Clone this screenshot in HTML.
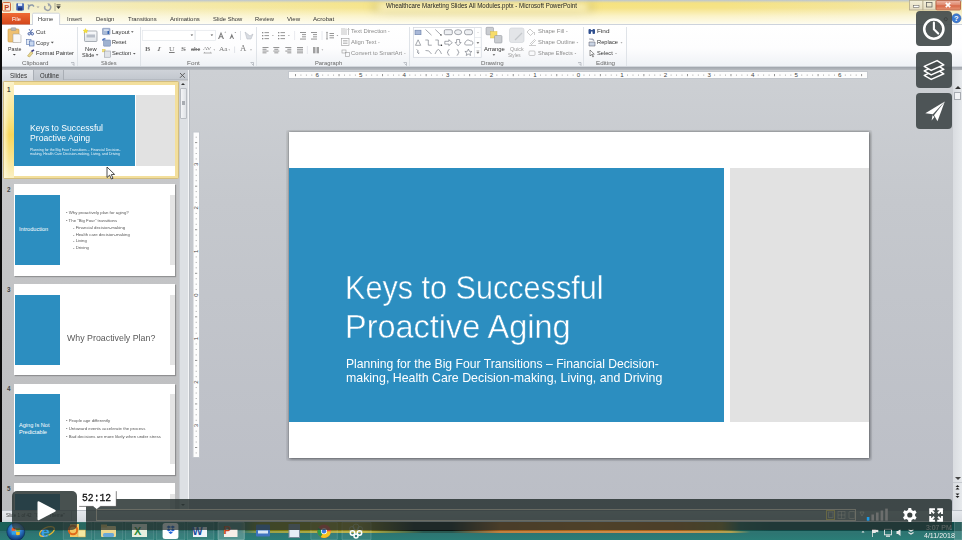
<!DOCTYPE html>
<html><head><meta charset="utf-8">
<style>
*{margin:0;padding:0;box-sizing:border-box}
html,body{width:962px;height:540px;overflow:hidden}
body{position:relative;background:#c6c9cd;font-family:"Liberation Sans",sans-serif;color:#333}
.a{position:absolute}
.t{position:absolute;white-space:nowrap;line-height:1}
svg{overflow:visible}
</style></head><body>

<!-- title bar -->
<div class="a" style="left:0;top:0;width:962px;height:25px;background:linear-gradient(90deg,#f2efcf 0%,#f4eab0 15%,#f5e48a 38%,#f6e27e 55%,#f5e282 75%,#f4e496 88%,#f2e8b0 100%)"></div>
<div class="a" style="left:0;top:0;width:962px;height:25px;background:linear-gradient(180deg,rgba(185,196,210,1) 0px,rgba(200,205,200,0.6) 1.5px,rgba(255,255,255,0) 3px,rgba(255,255,255,0.05) 8px,rgba(255,254,246,0.6) 16px,rgba(255,255,250,0.9) 24px)"></div>

<!-- ribbon -->
<div class="a" style="left:0;top:25px;width:962px;height:42px;background:linear-gradient(180deg,#ffffff 0%,#fdfdfe 55%,#eef1f5 100%)"></div>
<div class="a" style="left:0;top:66px;width:962px;height:1px;background:#d2d6dc"></div>
<div class="a" style="left:0;top:67px;width:962px;height:3px;background:linear-gradient(180deg,#9fa4ab,#b8bcc2)"></div>

<div class="a" style="left:378px;top:3px;width:210px;height:8px;background:rgba(255,252,225,0.55);filter:blur(3px);border-radius:4px;box-shadow:-6px 0 6px rgba(120,115,80,0.25),6px 0 6px rgba(120,115,80,0.25)"></div>
<svg class="a" style="left:0;top:0" width="962" height="70" viewBox="0 0 962 70">
<defs>
<linearGradient id="gFile" x1="0" y1="0" x2="0" y2="1"><stop offset="0" stop-color="#ef6a34"/><stop offset="1" stop-color="#d2461b"/></linearGradient>
<linearGradient id="gClose" x1="0" y1="0" x2="0" y2="1"><stop offset="0" stop-color="#ecb8a8"/><stop offset="0.45" stop-color="#e08a70"/><stop offset="0.55" stop-color="#d66848"/><stop offset="1" stop-color="#e89878"/></linearGradient>
<linearGradient id="gWin" x1="0" y1="0" x2="0" y2="1"><stop offset="0" stop-color="#f4f0da"/><stop offset="1" stop-color="#e4dcc0"/></linearGradient>
<linearGradient id="gSlide" x1="0" y1="0" x2="0" y2="1"><stop offset="0" stop-color="#fafbfc"/><stop offset="1" stop-color="#dfe3e8"/></linearGradient>
</defs>
<!-- QAT -->
<rect x="2.5" y="2.5" width="8" height="8.5" rx="1" fill="#fbe3d3" stroke="#d2693c" stroke-width="1"/>
<text x="4.3" y="9.6" font-family="Liberation Sans" font-size="7.5" font-weight="bold" fill="#c2461b">P</text>
<line x1="13" y1="3" x2="13" y2="11" stroke="#d9d2b0" stroke-width="0.8"/>
<rect x="16.3" y="3.3" width="7.6" height="7.2" rx="0.8" fill="#3f63b4"/>
<rect x="18" y="3.3" width="4.2" height="2.6" fill="#e8eef8"/>
<rect x="18" y="7.5" width="4.2" height="3" fill="#20357a"/>
<path d="M28.5 9.5 Q28 4.5 32.5 5 L34 6.5" fill="none" stroke="#8e9aa8" stroke-width="1.5"/>
<path d="M27.5 4 L28.5 8 L31 5.5Z" fill="#8e9aa8"/>
<path d="M36.5 6.5 l1.5 1.5 l1.5 -1.5Z" fill="#a0a0a0"/>
<path d="M45 6 A3 3 0 1 0 49.5 5" fill="none" stroke="#9aa0a8" stroke-width="1.4"/>
<path d="M47.5 3 L50.5 4 L48.5 6.5Z" fill="#9aa0a8"/>
<line x1="55" y1="3" x2="55" y2="11" stroke="#9a9a8a" stroke-width="0.8"/>
<rect x="56.5" y="4.5" width="4" height="0.8" fill="#333"/>
<path d="M56.3 6.3 h4.4 l-2.2 2.6Z" fill="#333"/>
<!-- window buttons -->
<rect x="909.5" y="0.5" width="13.5" height="9.5" fill="url(#gWin)" stroke="#b4ab8c" stroke-width="0.8"/>
<rect x="923" y="0.5" width="13" height="9.5" fill="url(#gWin)" stroke="#b4ab8c" stroke-width="0.8"/>
<rect x="913.5" y="5.5" width="5.5" height="1.8" fill="#fff" stroke="#555" stroke-width="0.5"/>
<rect x="926.5" y="2.5" width="5.5" height="4.5" fill="none" stroke="#555" stroke-width="0.7"/>
<rect x="936" y="0.5" width="24.5" height="9.5" rx="1" fill="url(#gClose)" stroke="#b55a3a" stroke-width="0.8"/>
<path d="M945.8 2.8 l4.4 4.4 M950.2 2.8 l-4.4 4.4" stroke="#fff" stroke-width="1.7"/>
<!-- tab line & tabs -->
<line x1="0" y1="24.5" x2="962" y2="24.5" stroke="#cdd3dc" stroke-width="1"/>
<rect x="2" y="13" width="28" height="11.5" fill="url(#gFile)"/>
<path d="M32.5 25 V14.5 Q32.5 13.2 33.8 13.2 H58.3 Q59.6 13.2 59.6 14.5 V25" fill="#ffffff" stroke="#c5ccd6" stroke-width="0.8"/>
<!-- group separators -->
<g stroke="#dfe3e8" stroke-width="1">
<line x1="77.5" y1="27" x2="77.5" y2="66"/>
<line x1="140.5" y1="27" x2="140.5" y2="66"/>
<line x1="256.5" y1="27" x2="256.5" y2="66"/>
<line x1="409.5" y1="27" x2="409.5" y2="66"/>
<line x1="583.5" y1="27" x2="583.5" y2="66"/>
<line x1="626.5" y1="27" x2="626.5" y2="66"/>
</g>
<!-- launchers -->
<g fill="none" stroke="#9aa0a8" stroke-width="0.6">
<path d="M71 62.5 h3 v3 M72 63.5 l2 2"/>
<path d="M250.5 62.5 h3 v3 M251.5 63.5 l2 2"/>
<path d="M403.5 62.5 h3 v3 M404.5 63.5 l2 2"/>
<path d="M578 62.5 h3 v3 M579 63.5 l2 2"/>
</g>
<!-- clipboard: paste -->
<rect x="8" y="29" width="11" height="13" rx="1" fill="#eec070" stroke="#c99a48" stroke-width="0.6"/>
<rect x="11" y="27.7" width="5" height="2.8" rx="0.8" fill="#b8b8b8" stroke="#888" stroke-width="0.4"/>
<path d="M13 34 h6.5 l1.5 1.5 v7 h-8Z" fill="#f8f8f8" stroke="#9a9a9a" stroke-width="0.5"/>
<path d="M12.8 54 h3 l-1.5 1.6Z" fill="#444"/>
<!-- cut -->
<path d="M29 29 L31.5 33 M32.5 29 L30 33" stroke="#5870a8" stroke-width="0.9"/>
<circle cx="29.2" cy="33.8" r="1.2" fill="none" stroke="#2f4e9a" stroke-width="0.9"/>
<circle cx="32.3" cy="33.8" r="1.2" fill="none" stroke="#2f4e9a" stroke-width="0.9"/>
<!-- copy -->
<rect x="26.5" y="39.5" width="4.5" height="5" fill="#dfe8f5" stroke="#5a78b0" stroke-width="0.6"/>
<rect x="29.5" y="41" width="4.5" height="5" fill="#c8d8ef" stroke="#4a68a8" stroke-width="0.6"/>
<path d="M50.8 41.8 h3 l-1.5 1.6Z" fill="#555"/>
<!-- format painter -->
<path d="M27.5 56 L31 51.5 L33 53 L29.5 57Z" fill="#e8d890" stroke="#a89040" stroke-width="0.5"/>
<path d="M31.5 51.5 L34 49.8" stroke="#403a80" stroke-width="1.6"/>
<!-- slides: new slide -->
<rect x="84.5" y="31" width="12.5" height="10.5" rx="0.8" fill="url(#gSlide)" stroke="#8a9099" stroke-width="0.7"/>
<rect x="86.5" y="34.5" width="8.5" height="3" fill="#b8bec8"/>
<path d="M85.5 28.5 l0.8 1.6 1.7 0.2 -1.3 1.1 0.4 1.7 -1.6 -0.9 -1.6 0.9 0.4 -1.7 -1.3 -1.1 1.7 -0.2Z" fill="#f6e23a" stroke="#e0c020" stroke-width="0.3"/>
<path d="M95.8 54.2 h2.6 l-1.3 1.5Z" fill="#555"/>
<!-- layout/reset/section -->
<rect x="102.5" y="28.3" width="7.5" height="6.3" rx="0.6" fill="#a9bad6" stroke="#6a7fa8" stroke-width="0.5"/>
<rect x="104" y="29.5" width="4.5" height="1.2" fill="#e8eef8"/>
<rect x="107.5" y="31" width="1.5" height="3" fill="#3060b0"/>
<path d="M131 31.3 h2.6 l-1.3 1.5Z" fill="#555"/>
<rect x="103.5" y="40" width="7" height="6.2" rx="0.6" fill="#9fb2d0" stroke="#6a7fa8" stroke-width="0.5"/>
<path d="M102.5 40.5 Q103 38.5 105.5 39" fill="none" stroke="#2f5ab0" stroke-width="1.2"/>
<rect x="102.5" y="49.3" width="2.6" height="2.6" fill="#f6e47a" stroke="#d8bc40" stroke-width="0.4"/>
<rect x="104.5" y="51" width="6" height="6.2" fill="#e0e3e8" stroke="#8a9099" stroke-width="0.5"/>
<path d="M133 53 h2.6 l-1.3 1.5Z" fill="#555"/>
<!-- font combos -->
<rect x="142.3" y="30.3" width="52.5" height="10.2" fill="#fff" stroke="#e2e5ea" stroke-width="0.7"/>
<rect x="195.5" y="30.3" width="20" height="10.2" fill="#fff" stroke="#e2e5ea" stroke-width="0.7"/>
<path d="M190.6 34.5 h2.6 l-1.3 1.5Z" fill="#555"/>
<path d="M210.6 34.5 h2.6 l-1.3 1.5Z" fill="#555"/>
<!-- grow/shrink -->
<g fill="#7a7a7a">
<path d="M218 39 L221 31.8 L224 39 h-1.2 l-0.7 -1.8 h-2.2 l-0.7 1.8Z M220.3 36.2 h1.5 l-0.75 -2Z"/>
<path d="M224.5 32.5 l0.8 -1 0.8 1Z"/>
<path d="M229.5 39 L231.8 33.5 L234 39 h-1 l-0.5 -1.4 h-1.5 l-0.5 1.4Z"/>
<path d="M234.5 32 l0.8 1 0.8 -1Z"/>
</g>
<line x1="240.5" y1="31" x2="240.5" y2="40" stroke="#e0e3e8"/>
<path d="M245 32 l5 4 l3 -2 l-2 5 l-4 0Z" fill="#d8dce2" stroke="#b0b5bc" stroke-width="0.5"/>
<!-- font row2 -->
<line x1="234.6" y1="46.5" x2="234.6" y2="53" stroke="#e0e3e8"/>
<path d="M213.5 49.5 h1.6 l-0.8 0.9Z M228.5 49.5 h1.6 l-0.8 0.9Z M250 49.5 h2 l-1 1Z" fill="#888"/>
<path d="M203.8 53 h7.6 M203.8 53 l1 -0.8 M211.4 53 l-1 -0.8" stroke="#7a7a7a" stroke-width="0.6" fill="none"/>
<!-- paragraph icons -->
<g fill="#8a8a8a">
<rect x="262" y="32" width="1.3" height="1.3"/><rect x="264.5" y="32.2" width="4.5" height="0.9"/>
<rect x="262" y="35" width="1.3" height="1.3"/><rect x="264.5" y="35.2" width="4.5" height="0.9"/>
<rect x="262" y="38" width="1.3" height="1.3"/><rect x="264.5" y="38.2" width="4.5" height="0.9"/>
<rect x="278" y="32" width="1.3" height="1.3"/><rect x="280.5" y="32.2" width="4.5" height="0.9"/>
<rect x="278" y="35" width="1.3" height="1.3"/><rect x="280.5" y="35.2" width="4.5" height="0.9"/>
<rect x="278" y="38" width="1.3" height="1.3"/><rect x="280.5" y="38.2" width="4.5" height="0.9"/>
<path d="M272 35 h1.8 l-0.9 1Z M288 35 h1.8 l-0.9 1Z M336.5 35 h1.8 l-0.9 1Z M321.5 49.5 h1.8 l-0.9 1Z"/>
<rect x="300" y="32" width="6" height="0.9"/><rect x="302" y="34.2" width="4" height="0.9"/><rect x="302" y="36.4" width="4" height="0.9"/><rect x="300" y="38.6" width="6" height="0.9"/>
<rect x="311" y="32" width="6" height="0.9"/><rect x="313" y="34.2" width="4" height="0.9"/><rect x="313" y="36.4" width="4" height="0.9"/><rect x="311" y="38.6" width="6" height="0.9"/>
<rect x="329.5" y="33" width="4.5" height="0.9"/><rect x="329.5" y="35.2" width="4.5" height="0.9"/><rect x="329.5" y="37.4" width="4.5" height="0.9"/>
<path d="M327 31.5 l1 1.5 h-2Z M327 40 l1 -1.5 h-2Z"/><rect x="326.6" y="32.8" width="0.8" height="6"/>
<rect x="262.5" y="47" width="6" height="0.9"/><rect x="262.5" y="48.8" width="4" height="0.9"/><rect x="262.5" y="50.6" width="6" height="0.9"/><rect x="262.5" y="52.4" width="4" height="0.9"/>
<rect x="273.3" y="47" width="6" height="0.9"/><rect x="274.3" y="48.8" width="4" height="0.9"/><rect x="273.3" y="50.6" width="6" height="0.9"/><rect x="274.3" y="52.4" width="4" height="0.9"/>
<rect x="285.3" y="47" width="6" height="0.9"/><rect x="287.3" y="48.8" width="4" height="0.9"/><rect x="285.3" y="50.6" width="6" height="0.9"/><rect x="287.3" y="52.4" width="4" height="0.9"/>
<rect x="297" y="47" width="6" height="0.9"/><rect x="297" y="48.8" width="6" height="0.9"/><rect x="297" y="50.6" width="6" height="0.9"/><rect x="297" y="52.4" width="6" height="0.9"/>
<rect x="313" y="47" width="2.5" height="6.3" opacity="0.8"/><rect x="316.5" y="47" width="2.5" height="6.3" opacity="0.8"/>
</g>
<g stroke="#e2e5ea" stroke-width="0.8"><line x1="294.6" y1="31" x2="294.6" y2="40"/><line x1="322" y1="31" x2="322" y2="40"/><line x1="307.4" y1="46" x2="307.4" y2="54"/></g>
<!-- text direction / align / smartart -->
<g fill="none" stroke="#9a9a9a" stroke-width="0.6">
<path d="M342 35 V28 M344 35 V28 M346 35 V28.5 M348.5 35 V28.5 l-1 1 M348.5 28.5 l1 1"/>
<rect x="341.5" y="38.5" width="7.5" height="7"/>
<path d="M343 40.5 h4.5 M343 42 h4.5 M343 43.5 h4.5"/>
<rect x="342" y="50" width="4" height="3"/><rect x="345.5" y="52.5" width="4" height="4"/>
</g>
<path d="M388 31 h1.8 l-0.9 1Z M378 42.3 h1.8 l-0.9 1Z M404 53 h1.8 l-0.9 1Z" fill="#aaa"/>
<!-- shapes gallery -->
<rect x="413.6" y="27.6" width="67.6" height="29.7" fill="#fff" stroke="#d0d5dc" stroke-width="0.7"/>
<line x1="474.5" y1="28" x2="474.5" y2="57" stroke="#dde1e6" stroke-width="0.7"/>
<line x1="474.5" y1="37.5" x2="481" y2="37.5" stroke="#dde1e6" stroke-width="0.6"/>
<line x1="474.5" y1="47.5" x2="481" y2="47.5" stroke="#dde1e6" stroke-width="0.6"/>
<path d="M476.5 42.2 h2.8 l-1.4 1.6Z" fill="#555"/>
<path d="M476.5 50.8 h2.8 M476.8 52 h2.2 l-1.1 1.5Z" stroke="#777" stroke-width="0.5" fill="#777"/>
<path d="M477 33 l1 -1 1 1" fill="none" stroke="#ccc" stroke-width="0.5"/>
<g fill="none" stroke="#6a6f78" stroke-width="0.6">
<rect x="415" y="30.2" width="6" height="4.5" fill="#a9b8d8" stroke="#6a7fa8"/>
<path d="M425.5 29.5 L431.5 35.2"/>
<path d="M435.3 29.5 L441 35"/>
<rect x="444.3" y="29.7" width="8" height="5" rx="1.2" fill="#eef0f3"/>
<ellipse cx="458.1" cy="32.2" rx="3.6" ry="2.5" fill="#eef0f3"/>
<rect x="464.5" y="29.7" width="8" height="5" rx="2" fill="#eef0f3"/>
<path d="M415.5 45.3 L418.1 39.8 L420.7 45.3Z"/>
<path d="M425.3 40 h3 v5.2 h3.5"/>
<path d="M435.3 40 h3 v5.2 h3"/>
<path d="M444.8 41.3 h4 v-1.6 l3.5 3 -3.5 3 v-1.6 h-4Z"/>
<path d="M456.6 39.5 h3 v3 h1.5 l-3 3.3 -3 -3.3 h1.5Z"/>
<path d="M465.5 45 a2 2 0 0 1 0.5 -3.5 a2.2 2.2 0 0 1 4 -0.5 a2 2 0 0 1 1.5 4Z"/>
<path d="M416.5 49.5 l2 1.5 -1.5 1 2 1.5 M418.5 54 l0.5 -1.5"/>
<path d="M425.5 50.5 Q429 49.5 431.5 54"/>
<path d="M435 54 Q437 49 438.5 49.5 Q440 50 441.5 54"/>
<path d="M449.5 49.5 Q448 49.5 448 51.2 Q448 52.3 447 52.4 Q448 52.5 448 53.6 Q448 55.3 449.5 55.3"/>
<path d="M456.7 49.5 Q458.2 49.5 458.2 51.2 Q458.2 52.3 459.2 52.4 Q458.2 52.5 458.2 53.6 Q458.2 55.3 456.7 55.3"/>
<path d="M468.4 49 l1 2.3 2.5 0.2 -1.9 1.6 0.6 2.4 -2.2 -1.3 -2.2 1.3 0.6 -2.4 -1.9 -1.6 2.5 -0.2Z"/>
</g>
<circle cx="441" cy="35" r="0.7" fill="#222"/><circle cx="441.5" cy="45.2" r="0.7" fill="#222"/>
<!-- arrange -->
<rect x="486" y="27.3" width="7.5" height="7.5" rx="1" fill="#c9ccd0" stroke="#8a8f96" stroke-width="0.5"/>
<rect x="490.5" y="31.5" width="6.5" height="6.5" fill="#f7dc6a" stroke="#d6b83a" stroke-width="0.4"/>
<rect x="494.5" y="35.5" width="7.5" height="7.5" rx="1" fill="#c9ccd0" stroke="#8a8f96" stroke-width="0.5"/>
<path d="M492.6 54.3 h2.6 l-1.3 1.5Z" fill="#555"/>
<!-- quick styles -->
<rect x="509.5" y="28" width="14.5" height="14.5" rx="2" fill="#e3e5e8" stroke="#cfd2d6" stroke-width="0.6"/>
<path d="M515 40 L522 33" stroke="#c5c8cc" stroke-width="1.2"/>
<!-- shape fill etc -->
<g fill="none" stroke="#aaa" stroke-width="0.6">
<path d="M530 29 l3.5 3.5 -3 3 -3.5 -3.5Z"/><path d="M534.5 32 v3"/>
<path d="M529 45.5 h7 M530 44 l4.5 -4.5 1 1 -4.5 4.5"/>
<rect x="529" y="51" width="6" height="4.5" rx="1"/>
</g>
<path d="M566 31 h1.8 l-0.9 1Z M576.5 42.3 h1.8 l-0.9 1Z M574.5 53 h1.8 l-0.9 1Z M620.5 42.3 h2 l-1 1.1Z M615 53 h2 l-1 1.1Z" fill="#999"/>
<!-- editing -->
<g fill="#2f4f8f">
<rect x="588.5" y="29" width="2.5" height="5" rx="1"/><rect x="592.5" y="29" width="2.5" height="5" rx="1"/><rect x="590.5" y="30" width="2.5" height="1.5"/>
</g>
<path d="M589 39 h4 l1 2 M589 42 h6 v4 h-6Z" fill="#c9d3e3" stroke="#556" stroke-width="0.5"/>
<path d="M590 50 v6 l1.5 -1.5 1.3 2.5 0.8 -0.4 -1.3 -2.4 h2Z" fill="#fff" stroke="#333" stroke-width="0.5"/>
</svg>

<div class="t" style="left:386.2px;top:3.2px;font-size:6.8px;color:#222;transform:scaleX(0.901);transform-origin:0 0">Whealthcare Marketing Slides All Modules.pptx - Microsoft PowerPoint</div>
<div class="t" style="left:11.6px;top:16.0px;font-size:6.2px;color:#ffffff;transform:scaleX(0.891);transform-origin:0 0">File</div>
<div class="t" style="left:38.4px;top:15.8px;font-size:6.2px;color:#333;transform:scaleX(0.926);transform-origin:0 0">Home</div>
<div class="t" style="left:67.1px;top:15.8px;font-size:6.2px;color:#333;transform:scaleX(0.962);transform-origin:0 0">Insert</div>
<div class="t" style="left:95.7px;top:15.8px;font-size:6.2px;color:#333;transform:scaleX(0.955);transform-origin:0 0">Design</div>
<div class="t" style="left:127.6px;top:15.8px;font-size:6.2px;color:#333;transform:scaleX(0.952);transform-origin:0 0">Transitions</div>
<div class="t" style="left:169.5px;top:15.8px;font-size:6.2px;color:#333;transform:scaleX(0.974);transform-origin:0 0">Animations</div>
<div class="t" style="left:212.5px;top:15.8px;font-size:6.2px;color:#333;transform:scaleX(0.946);transform-origin:0 0">Slide Show</div>
<div class="t" style="left:255.1px;top:15.8px;font-size:6.2px;color:#333;transform:scaleX(0.936);transform-origin:0 0">Review</div>
<div class="t" style="left:287.1px;top:15.8px;font-size:6.2px;color:#333;transform:scaleX(0.992);transform-origin:0 0">View</div>
<div class="t" style="left:313.4px;top:15.8px;font-size:6.2px;color:#333;transform:scaleX(0.994);transform-origin:0 0">Acrobat</div>
<div class="t" style="left:7.6px;top:45.5px;font-size:6.2px;color:#333;transform:scaleX(0.853);transform-origin:0 0">Paste</div>
<div class="t" style="left:35.9px;top:28.7px;font-size:6.2px;color:#333;transform:scaleX(0.965);transform-origin:0 0">Cut</div>
<div class="t" style="left:35.9px;top:39.5px;font-size:6.2px;color:#333;transform:scaleX(0.927);transform-origin:0 0">Copy</div>
<div class="t" style="left:35.9px;top:50.3px;font-size:6.2px;color:#333;transform:scaleX(0.929);transform-origin:0 0">Format Painter</div>
<div class="t" style="left:22.0px;top:60.3px;font-size:6.2px;color:#666;transform:scaleX(1.001);transform-origin:0 0">Clipboard</div>
<div class="t" style="left:84.7px;top:45.7px;font-size:6.2px;color:#333;transform:scaleX(0.936);transform-origin:0 0">New</div>
<div class="t" style="left:82.2px;top:51.8px;font-size:6.2px;color:#333;transform:scaleX(0.901);transform-origin:0 0">Slide</div>
<div class="t" style="left:111.6px;top:28.7px;font-size:6.2px;color:#333;transform:scaleX(0.953);transform-origin:0 0">Layout</div>
<div class="t" style="left:111.7px;top:39.3px;font-size:6.2px;color:#333;transform:scaleX(0.884);transform-origin:0 0">Reset</div>
<div class="t" style="left:112.0px;top:50.2px;font-size:6.2px;color:#333;transform:scaleX(0.935);transform-origin:0 0">Section</div>
<div class="t" style="left:100.6px;top:60.3px;font-size:6.2px;color:#666;transform:scaleX(0.931);transform-origin:0 0">Slides</div>
<div class="t" style="left:186.6px;top:60.3px;font-size:6.2px;color:#666;transform:scaleX(1.033);transform-origin:0 0">Font</div>
<div class="t" style="left:350.7px;top:28.2px;font-size:6.2px;color:#8c8c8c;transform:scaleX(0.950);transform-origin:0 0">Text Direction</div>
<div class="t" style="left:350.7px;top:39.4px;font-size:6.2px;color:#8c8c8c;transform:scaleX(0.951);transform-origin:0 0">Align Text</div>
<div class="t" style="left:350.7px;top:50.3px;font-size:6.2px;color:#8c8c8c;transform:scaleX(0.936);transform-origin:0 0">Convert to SmartArt</div>
<div class="t" style="left:314.7px;top:60.3px;font-size:6.2px;color:#666;transform:scaleX(0.938);transform-origin:0 0">Paragraph</div>
<div class="t" style="left:483.6px;top:45.5px;font-size:6.2px;color:#333;transform:scaleX(0.949);transform-origin:0 0">Arrange</div>
<div class="t" style="left:509.9px;top:45.5px;font-size:6.2px;color:#9a9a9a;transform:scaleX(0.866);transform-origin:0 0">Quick</div>
<div class="t" style="left:507.5px;top:51.8px;font-size:6.2px;color:#9a9a9a;transform:scaleX(0.747);transform-origin:0 0">Styles</div>
<div class="t" style="left:537.9px;top:28.1px;font-size:6.2px;color:#8c8c8c;transform:scaleX(0.959);transform-origin:0 0">Shape Fill</div>
<div class="t" style="left:537.9px;top:39.4px;font-size:6.2px;color:#8c8c8c;transform:scaleX(0.946);transform-origin:0 0">Shape Outline</div>
<div class="t" style="left:537.9px;top:50.3px;font-size:6.2px;color:#8c8c8c;transform:scaleX(0.903);transform-origin:0 0">Shape Effects</div>
<div class="t" style="left:480.7px;top:60.3px;font-size:6.2px;color:#666;transform:scaleX(0.995);transform-origin:0 0">Drawing</div>
<div class="t" style="left:597.2px;top:28.1px;font-size:6.2px;color:#333;transform:scaleX(1.038);transform-origin:0 0">Find</div>
<div class="t" style="left:597.2px;top:39.4px;font-size:6.2px;color:#333;transform:scaleX(0.925);transform-origin:0 0">Replace</div>
<div class="t" style="left:597.2px;top:50.3px;font-size:6.2px;color:#333;transform:scaleX(0.913);transform-origin:0 0">Select</div>
<div class="t" style="left:595.9px;top:60.3px;font-size:6.2px;color:#666;transform:scaleX(1.009);transform-origin:0 0">Editing</div>
<div class="t" style="left:145.2px;top:46.0px;font-size:6.8px;color:#7a7a7a;font-weight:bold;font-family:'Liberation Serif',serif;transform:scaleX(1.166);transform-origin:0 0">B</div>
<div class="t" style="left:156.9px;top:46.0px;font-size:6.8px;color:#7a7a7a;font-family:'Liberation Serif',serif;transform:scaleX(1.721);transform-origin:0 0"><i>I</i></div>
<div class="t" style="left:168.7px;top:45.8px;font-size:6.8px;color:#7a7a7a;font-family:'Liberation Serif',serif;transform:scaleX(1.138);transform-origin:0 0"><u>U</u></div>
<div class="t" style="left:180.7px;top:46.0px;font-size:6.8px;color:#7a7a7a;font-weight:bold;font-family:'Liberation Serif',serif;transform:scaleX(1.349);transform-origin:0 0">S</div>
<div class="t" style="left:190.7px;top:46.4px;font-size:6.5px;color:#7a7a7a;font-weight:bold;font-family:'Liberation Serif',serif;transform:scaleX(0.933);transform-origin:0 0"><s>abc</s></div>
<div class="t" style="left:203.4px;top:45.6px;font-size:5px;color:#7a7a7a;font-family:'Liberation Serif',serif;transform:scaleX(1.262);transform-origin:0 0">AV</div>
<div class="t" style="left:218.7px;top:45.9px;font-size:7px;color:#7a7a7a;font-family:'Liberation Serif',serif;transform:scaleX(1.052);transform-origin:0 0">Aa</div>
<div class="t" style="left:240.0px;top:45.4px;font-size:7.5px;color:#7a7a7a;font-family:'Liberation Serif',serif;transform:scaleX(1.162);transform-origin:0 0">A</div>

<!-- left panel -->
<div class="a" style="left:2px;top:70px;width:186px;height:440px;background:linear-gradient(180deg,#cacbcd 0%,#bbbcbe 100%)"></div>
<!-- panel tabs -->
<div class="a" style="left:2px;top:70px;width:186px;height:10px;background:linear-gradient(180deg,#cfd3d9,#c3c8cf);border-bottom:1px solid #b5bac1"></div>
<div class="a" style="left:2px;top:70px;width:31px;height:11px;background:linear-gradient(180deg,#e4e7eb,#d6d9de)"></div>
<div class="a" style="left:33px;top:70px;width:31px;height:10px;background:linear-gradient(180deg,#cdd1d7,#bfc4cb);border-left:1px solid #a9aeb5;border-right:1px solid #a9aeb5"></div>
<div class="t" style="left:10px;top:71.5px;font-size:8px;color:#333;transform:scaleX(0.78);transform-origin:0 0">Slides</div>
<div class="t" style="left:39.5px;top:71.5px;font-size:8px;color:#333;transform:scaleX(0.75);transform-origin:0 0">Outline</div>
<svg class="a" style="left:178px;top:71px" width="9" height="9" viewBox="0 0 9 9"><path d="M2 2 L6.8 6.8 M6.8 2 L2 6.8" stroke="#555" stroke-width="0.9"/></svg>

<!-- panel scrollbar -->
<div class="a" style="left:179px;top:81px;width:9px;height:429px;background:#dde0e4;border-left:1px solid #c8ccd1"></div>
<div class="a" style="left:180px;top:88px;width:7px;height:31px;background:linear-gradient(90deg,#f4f5f7,#dfe2e6);border:1px solid #b8bcc2;border-radius:1px"></div>
<div class="a" style="left:182px;top:101px;width:3px;height:4px;background:#a8acb2"></div>
<div class="a" style="left:181.2px;top:82.8px;width:0;height:0;border-left:2.3px solid transparent;border-right:2.3px solid transparent;border-bottom:2.3px solid #333"></div>
<div class="a" style="left:188px;top:70px;width:1px;height:440px;background:#f4f5f7"></div>
<div class="a" style="left:189px;top:70px;width:1px;height:440px;background:#b9bdc3"></div>

<!-- thumb 1 selected -->
<div class="a" style="left:2.5px;top:81px;width:176.5px;height:98px;background:#f3df9c;border:1px solid #d2bd80;border-radius:1.5px"></div>
<div class="a" style="left:3.5px;top:82px;width:10.5px;height:96px;background:linear-gradient(180deg,#fbf1c8 0%,#f9e68e 35%,#f7d65a 55%,#f9e490 80%,#fbf0c4 100%)"></div>
<div class="a" style="left:3.5px;top:82px;width:5px;height:96px;background:linear-gradient(90deg,rgba(255,250,225,0.7),rgba(255,250,225,0))"></div>
<div class="t" style="left:7px;top:87px;font-size:6.3px;font-weight:bold;color:#444">1</div>
<div class="a" style="left:14px;top:85px;width:161px;height:91px;background:#fff"></div>
<div class="a" style="left:14px;top:95px;width:120.5px;height:70.5px;background:#2c8ec0"></div>
<div class="a" style="left:136px;top:95px;width:39px;height:70.5px;background:#e2e2e2"></div>
<div class="t" style="left:30px;top:123px;font-size:9.5px;color:#fff;line-height:10.3px;transform:scaleX(0.91);transform-origin:0 0">Keys to Successful<br>Proactive Aging</div>
<div class="t" style="left:30px;top:147.5px;font-size:9.5px;color:#e8f2f8;line-height:10.5px;transform:scale(0.37);transform-origin:0 0">Planning for the Big Four Transitions &#8211; Financial Decision-<br>making, Health Care Decision-making, Living, and Driving</div>

<!-- thumb 2 -->
<div class="t" style="left:7px;top:186.8px;font-size:6.3px;font-weight:bold;color:#444">2</div>
<div class="a" style="left:14px;top:184px;width:161px;height:91.5px;background:#fff;box-shadow:1px 1px 1px rgba(0,0,0,0.25)"></div>
<div class="a" style="left:15px;top:195px;width:44.5px;height:69.5px;background:#2c8ec0"></div>
<div class="a" style="left:170px;top:195px;width:4.5px;height:69.5px;background:#e4e4e4"></div>
<div class="t" style="left:19px;top:227px;font-size:5.6px;color:#fff">Introduction</div>
<div class="t" style="left:66px;top:208.8px;font-size:10px;color:#555;line-height:15px;transform:scale(0.43);transform-origin:0 0">&#8226; Why proactively plan for aging?</div>
<div class="t" style="left:66px;top:217.2px;font-size:10px;color:#555;line-height:15px;transform:scale(0.43);transform-origin:0 0">&#8226; The &#8220;Big Four&#8221; transitions</div>
<div class="t" style="left:73px;top:223.7px;font-size:10px;color:#555;line-height:15.6px;transform:scale(0.43);transform-origin:0 0">- Financial decision-making<br>- Health care decision-making<br>- Living<br>- Driving</div>

<!-- thumb 3 -->
<div class="t" style="left:7px;top:286.8px;font-size:6.3px;font-weight:bold;color:#444">3</div>
<div class="a" style="left:14px;top:283.5px;width:161px;height:91.5px;background:#fff;box-shadow:1px 1px 1px rgba(0,0,0,0.25)"></div>
<div class="a" style="left:15px;top:295px;width:44.5px;height:69.5px;background:#2c8ec0"></div>
<div class="a" style="left:170px;top:295px;width:4.5px;height:69.5px;background:#e4e4e4"></div>
<div class="t" style="left:66.5px;top:333px;font-size:9.6px;color:#5a5a5a;transform:scaleX(0.92);transform-origin:0 0">Why Proactively Plan?</div>

<!-- thumb 4 -->
<div class="t" style="left:7px;top:385.8px;font-size:6.3px;font-weight:bold;color:#444">4</div>
<div class="a" style="left:14px;top:383.5px;width:161px;height:91px;background:#fff;box-shadow:1px 1px 1px rgba(0,0,0,0.25)"></div>
<div class="a" style="left:15px;top:394px;width:44.5px;height:69.5px;background:#2c8ec0"></div>
<div class="a" style="left:170px;top:394px;width:4.5px;height:69.5px;background:#e4e4e4"></div>
<div class="t" style="left:19px;top:422px;font-size:5.6px;color:#fff;line-height:6.5px">Aging Is Not<br>Predictable</div>
<div class="t" style="left:66px;top:416.3px;font-size:10px;color:#555;line-height:19.3px;transform:scale(0.43);transform-origin:0 0">&#8226; People age differently<br>&#8226; Untoward events accelerate the process<br>&#8226; Bad decisions are more likely when under stress</div>

<!-- thumb 5 -->
<div class="t" style="left:7px;top:485.8px;font-size:6.3px;font-weight:bold;color:#444">5</div>
<div class="a" style="left:14px;top:483px;width:161px;height:30px;background:#fff"></div>
<div class="a" style="left:15px;top:494px;width:44.5px;height:20px;background:#2c8ec0"></div>
<div class="a" style="left:170px;top:494px;width:4.5px;height:20px;background:#e4e4e4"></div>


<svg class="a" style="left:105.5px;top:165.5px" width="10" height="14" viewBox="0 0 10 14"><path d="M1 1 V11.5 L3.6 9.2 L5.4 13 L7 12.3 L5.3 8.6 L8.6 8.4Z" fill="#fff" stroke="#222" stroke-width="0.8" stroke-linejoin="round"/></svg>
<div class="a" style="left:180.5px;top:503.5px;width:0;height:0;border-left:2.5px solid transparent;border-right:2.5px solid transparent;border-top:2.5px solid #444"></div>


<div class="a" style="left:190px;top:70px;width:763px;height:440px;background:linear-gradient(180deg,#cdd0d4 0%,#c5c8cd 30%,#bbbec6 100%)"></div>
<!-- rulers -->
<svg class="a" style="left:288px;top:71px" width="580" height="8" viewBox="288 71 580 8">
<rect x="288.5" y="71.5" width="579" height="7" fill="#fdfdfd" stroke="#c3c7cd" stroke-width="1"/>
<rect x="295.03" y="74" width="0.9" height="2.2" fill="#888"/>
<rect x="300.47" y="74.6" width="0.9" height="1" fill="#999"/>
<rect x="305.91" y="74.6" width="0.9" height="1" fill="#999"/>
<rect x="311.36" y="74.6" width="0.9" height="1" fill="#999"/>
<text x="317.20" y="77.3" font-family="Liberation Sans" font-size="6.2" fill="#444" text-anchor="middle">6</text>
<rect x="322.24" y="74.6" width="0.9" height="1" fill="#999"/>
<rect x="327.69" y="74.6" width="0.9" height="1" fill="#999"/>
<rect x="333.13" y="74.6" width="0.9" height="1" fill="#999"/>
<rect x="338.58" y="74" width="0.9" height="2.2" fill="#888"/>
<rect x="344.02" y="74.6" width="0.9" height="1" fill="#999"/>
<rect x="349.46" y="74.6" width="0.9" height="1" fill="#999"/>
<rect x="354.91" y="74.6" width="0.9" height="1" fill="#999"/>
<text x="360.75" y="77.3" font-family="Liberation Sans" font-size="6.2" fill="#444" text-anchor="middle">5</text>
<rect x="365.79" y="74.6" width="0.9" height="1" fill="#999"/>
<rect x="371.24" y="74.6" width="0.9" height="1" fill="#999"/>
<rect x="376.68" y="74.6" width="0.9" height="1" fill="#999"/>
<rect x="382.12" y="74" width="0.9" height="2.2" fill="#888"/>
<rect x="387.57" y="74.6" width="0.9" height="1" fill="#999"/>
<rect x="393.01" y="74.6" width="0.9" height="1" fill="#999"/>
<rect x="398.46" y="74.6" width="0.9" height="1" fill="#999"/>
<text x="404.30" y="77.3" font-family="Liberation Sans" font-size="6.2" fill="#444" text-anchor="middle">4</text>
<rect x="409.34" y="74.6" width="0.9" height="1" fill="#999"/>
<rect x="414.79" y="74.6" width="0.9" height="1" fill="#999"/>
<rect x="420.23" y="74.6" width="0.9" height="1" fill="#999"/>
<rect x="425.68" y="74" width="0.9" height="2.2" fill="#888"/>
<rect x="431.12" y="74.6" width="0.9" height="1" fill="#999"/>
<rect x="436.56" y="74.6" width="0.9" height="1" fill="#999"/>
<rect x="442.01" y="74.6" width="0.9" height="1" fill="#999"/>
<text x="447.85" y="77.3" font-family="Liberation Sans" font-size="6.2" fill="#444" text-anchor="middle">3</text>
<rect x="452.89" y="74.6" width="0.9" height="1" fill="#999"/>
<rect x="458.34" y="74.6" width="0.9" height="1" fill="#999"/>
<rect x="463.78" y="74.6" width="0.9" height="1" fill="#999"/>
<rect x="469.23" y="74" width="0.9" height="2.2" fill="#888"/>
<rect x="474.67" y="74.6" width="0.9" height="1" fill="#999"/>
<rect x="480.11" y="74.6" width="0.9" height="1" fill="#999"/>
<rect x="485.56" y="74.6" width="0.9" height="1" fill="#999"/>
<text x="491.40" y="77.3" font-family="Liberation Sans" font-size="6.2" fill="#444" text-anchor="middle">2</text>
<rect x="496.44" y="74.6" width="0.9" height="1" fill="#999"/>
<rect x="501.89" y="74.6" width="0.9" height="1" fill="#999"/>
<rect x="507.33" y="74.6" width="0.9" height="1" fill="#999"/>
<rect x="512.77" y="74" width="0.9" height="2.2" fill="#888"/>
<rect x="518.22" y="74.6" width="0.9" height="1" fill="#999"/>
<rect x="523.66" y="74.6" width="0.9" height="1" fill="#999"/>
<rect x="529.11" y="74.6" width="0.9" height="1" fill="#999"/>
<text x="534.95" y="77.3" font-family="Liberation Sans" font-size="6.2" fill="#444" text-anchor="middle">1</text>
<rect x="539.99" y="74.6" width="0.9" height="1" fill="#999"/>
<rect x="545.44" y="74.6" width="0.9" height="1" fill="#999"/>
<rect x="550.88" y="74.6" width="0.9" height="1" fill="#999"/>
<rect x="556.33" y="74" width="0.9" height="2.2" fill="#888"/>
<rect x="561.77" y="74.6" width="0.9" height="1" fill="#999"/>
<rect x="567.21" y="74.6" width="0.9" height="1" fill="#999"/>
<rect x="572.66" y="74.6" width="0.9" height="1" fill="#999"/>
<text x="578.50" y="77.3" font-family="Liberation Sans" font-size="6.2" fill="#444" text-anchor="middle">0</text>
<rect x="583.54" y="74.6" width="0.9" height="1" fill="#999"/>
<rect x="588.99" y="74.6" width="0.9" height="1" fill="#999"/>
<rect x="594.43" y="74.6" width="0.9" height="1" fill="#999"/>
<rect x="599.88" y="74" width="0.9" height="2.2" fill="#888"/>
<rect x="605.32" y="74.6" width="0.9" height="1" fill="#999"/>
<rect x="610.76" y="74.6" width="0.9" height="1" fill="#999"/>
<rect x="616.21" y="74.6" width="0.9" height="1" fill="#999"/>
<text x="622.05" y="77.3" font-family="Liberation Sans" font-size="6.2" fill="#444" text-anchor="middle">1</text>
<rect x="627.09" y="74.6" width="0.9" height="1" fill="#999"/>
<rect x="632.54" y="74.6" width="0.9" height="1" fill="#999"/>
<rect x="637.98" y="74.6" width="0.9" height="1" fill="#999"/>
<rect x="643.43" y="74" width="0.9" height="2.2" fill="#888"/>
<rect x="648.87" y="74.6" width="0.9" height="1" fill="#999"/>
<rect x="654.31" y="74.6" width="0.9" height="1" fill="#999"/>
<rect x="659.76" y="74.6" width="0.9" height="1" fill="#999"/>
<text x="665.60" y="77.3" font-family="Liberation Sans" font-size="6.2" fill="#444" text-anchor="middle">2</text>
<rect x="670.64" y="74.6" width="0.9" height="1" fill="#999"/>
<rect x="676.09" y="74.6" width="0.9" height="1" fill="#999"/>
<rect x="681.53" y="74.6" width="0.9" height="1" fill="#999"/>
<rect x="686.98" y="74" width="0.9" height="2.2" fill="#888"/>
<rect x="692.42" y="74.6" width="0.9" height="1" fill="#999"/>
<rect x="697.86" y="74.6" width="0.9" height="1" fill="#999"/>
<rect x="703.31" y="74.6" width="0.9" height="1" fill="#999"/>
<text x="709.15" y="77.3" font-family="Liberation Sans" font-size="6.2" fill="#444" text-anchor="middle">3</text>
<rect x="714.19" y="74.6" width="0.9" height="1" fill="#999"/>
<rect x="719.64" y="74.6" width="0.9" height="1" fill="#999"/>
<rect x="725.08" y="74.6" width="0.9" height="1" fill="#999"/>
<rect x="730.52" y="74" width="0.9" height="2.2" fill="#888"/>
<rect x="735.97" y="74.6" width="0.9" height="1" fill="#999"/>
<rect x="741.41" y="74.6" width="0.9" height="1" fill="#999"/>
<rect x="746.86" y="74.6" width="0.9" height="1" fill="#999"/>
<text x="752.70" y="77.3" font-family="Liberation Sans" font-size="6.2" fill="#444" text-anchor="middle">4</text>
<rect x="757.74" y="74.6" width="0.9" height="1" fill="#999"/>
<rect x="763.19" y="74.6" width="0.9" height="1" fill="#999"/>
<rect x="768.63" y="74.6" width="0.9" height="1" fill="#999"/>
<rect x="774.08" y="74" width="0.9" height="2.2" fill="#888"/>
<rect x="779.52" y="74.6" width="0.9" height="1" fill="#999"/>
<rect x="784.96" y="74.6" width="0.9" height="1" fill="#999"/>
<rect x="790.41" y="74.6" width="0.9" height="1" fill="#999"/>
<text x="796.25" y="77.3" font-family="Liberation Sans" font-size="6.2" fill="#444" text-anchor="middle">5</text>
<rect x="801.29" y="74.6" width="0.9" height="1" fill="#999"/>
<rect x="806.74" y="74.6" width="0.9" height="1" fill="#999"/>
<rect x="812.18" y="74.6" width="0.9" height="1" fill="#999"/>
<rect x="817.62" y="74" width="0.9" height="2.2" fill="#888"/>
<rect x="823.07" y="74.6" width="0.9" height="1" fill="#999"/>
<rect x="828.51" y="74.6" width="0.9" height="1" fill="#999"/>
<rect x="833.96" y="74.6" width="0.9" height="1" fill="#999"/>
<text x="839.80" y="77.3" font-family="Liberation Sans" font-size="6.2" fill="#444" text-anchor="middle">6</text>
<rect x="844.84" y="74.6" width="0.9" height="1" fill="#999"/>
<rect x="850.29" y="74.6" width="0.9" height="1" fill="#999"/>
<rect x="855.73" y="74.6" width="0.9" height="1" fill="#999"/>
<rect x="861.18" y="74" width="0.9" height="2.2" fill="#888"/>
</svg>
<svg class="a" style="left:192px;top:131px" width="9" height="328" viewBox="192 131 9 328">
<rect x="193" y="132" width="6.5" height="325.5" fill="#fdfdfd" stroke="#c3c7cd" stroke-width="1"/>
<rect x="195.7" y="136.73" width="1" height="0.9" fill="#999"/>
<rect x="195" y="142.18" width="2.2" height="0.9" fill="#888"/>
<rect x="195.7" y="147.62" width="1" height="0.9" fill="#999"/>
<rect x="195.7" y="153.06" width="1" height="0.9" fill="#999"/>
<rect x="195.7" y="158.51" width="1" height="0.9" fill="#999"/>
<text x="0" y="0" transform="translate(198.3 164.35) rotate(-90)" font-family="Liberation Sans" font-size="6" fill="#444" text-anchor="middle">3</text>
<rect x="195.7" y="169.39" width="1" height="0.9" fill="#999"/>
<rect x="195.7" y="174.84" width="1" height="0.9" fill="#999"/>
<rect x="195.7" y="180.28" width="1" height="0.9" fill="#999"/>
<rect x="195" y="185.72" width="2.2" height="0.9" fill="#888"/>
<rect x="195.7" y="191.17" width="1" height="0.9" fill="#999"/>
<rect x="195.7" y="196.61" width="1" height="0.9" fill="#999"/>
<rect x="195.7" y="202.06" width="1" height="0.9" fill="#999"/>
<text x="0" y="0" transform="translate(198.3 207.90) rotate(-90)" font-family="Liberation Sans" font-size="6" fill="#444" text-anchor="middle">2</text>
<rect x="195.7" y="212.94" width="1" height="0.9" fill="#999"/>
<rect x="195.7" y="218.39" width="1" height="0.9" fill="#999"/>
<rect x="195.7" y="223.83" width="1" height="0.9" fill="#999"/>
<rect x="195" y="229.28" width="2.2" height="0.9" fill="#888"/>
<rect x="195.7" y="234.72" width="1" height="0.9" fill="#999"/>
<rect x="195.7" y="240.16" width="1" height="0.9" fill="#999"/>
<rect x="195.7" y="245.61" width="1" height="0.9" fill="#999"/>
<text x="0" y="0" transform="translate(198.3 251.45) rotate(-90)" font-family="Liberation Sans" font-size="6" fill="#444" text-anchor="middle">1</text>
<rect x="195.7" y="256.49" width="1" height="0.9" fill="#999"/>
<rect x="195.7" y="261.94" width="1" height="0.9" fill="#999"/>
<rect x="195.7" y="267.38" width="1" height="0.9" fill="#999"/>
<rect x="195" y="272.83" width="2.2" height="0.9" fill="#888"/>
<rect x="195.7" y="278.27" width="1" height="0.9" fill="#999"/>
<rect x="195.7" y="283.71" width="1" height="0.9" fill="#999"/>
<rect x="195.7" y="289.16" width="1" height="0.9" fill="#999"/>
<text x="0" y="0" transform="translate(198.3 295.00) rotate(-90)" font-family="Liberation Sans" font-size="6" fill="#444" text-anchor="middle">0</text>
<rect x="195.7" y="300.04" width="1" height="0.9" fill="#999"/>
<rect x="195.7" y="305.49" width="1" height="0.9" fill="#999"/>
<rect x="195.7" y="310.93" width="1" height="0.9" fill="#999"/>
<rect x="195" y="316.38" width="2.2" height="0.9" fill="#888"/>
<rect x="195.7" y="321.82" width="1" height="0.9" fill="#999"/>
<rect x="195.7" y="327.26" width="1" height="0.9" fill="#999"/>
<rect x="195.7" y="332.71" width="1" height="0.9" fill="#999"/>
<text x="0" y="0" transform="translate(198.3 338.55) rotate(-90)" font-family="Liberation Sans" font-size="6" fill="#444" text-anchor="middle">1</text>
<rect x="195.7" y="343.59" width="1" height="0.9" fill="#999"/>
<rect x="195.7" y="349.04" width="1" height="0.9" fill="#999"/>
<rect x="195.7" y="354.48" width="1" height="0.9" fill="#999"/>
<rect x="195" y="359.93" width="2.2" height="0.9" fill="#888"/>
<rect x="195.7" y="365.37" width="1" height="0.9" fill="#999"/>
<rect x="195.7" y="370.81" width="1" height="0.9" fill="#999"/>
<rect x="195.7" y="376.26" width="1" height="0.9" fill="#999"/>
<text x="0" y="0" transform="translate(198.3 382.10) rotate(-90)" font-family="Liberation Sans" font-size="6" fill="#444" text-anchor="middle">2</text>
<rect x="195.7" y="387.14" width="1" height="0.9" fill="#999"/>
<rect x="195.7" y="392.59" width="1" height="0.9" fill="#999"/>
<rect x="195.7" y="398.03" width="1" height="0.9" fill="#999"/>
<rect x="195" y="403.48" width="2.2" height="0.9" fill="#888"/>
<rect x="195.7" y="408.92" width="1" height="0.9" fill="#999"/>
<rect x="195.7" y="414.36" width="1" height="0.9" fill="#999"/>
<rect x="195.7" y="419.81" width="1" height="0.9" fill="#999"/>
<text x="0" y="0" transform="translate(198.3 425.65) rotate(-90)" font-family="Liberation Sans" font-size="6" fill="#444" text-anchor="middle">3</text>
<rect x="195.7" y="430.69" width="1" height="0.9" fill="#999"/>
<rect x="195.7" y="436.14" width="1" height="0.9" fill="#999"/>
<rect x="195.7" y="441.58" width="1" height="0.9" fill="#999"/>
<rect x="195" y="447.02" width="2.2" height="0.9" fill="#888"/>
<rect x="195.7" y="452.47" width="1" height="0.9" fill="#999"/>
</svg>

<!-- right scrollbar -->
<div class="a" style="left:953px;top:70px;width:9px;height:440px;background:linear-gradient(90deg,#d9dce0,#e6e9ec)"></div>
<div class="a" style="left:954px;top:92px;width:7px;height:8px;background:#f2f3f5;border:1px solid #a7abb1"></div>
<div class="a" style="left:955px;top:86px;width:0;height:0;border-left:3px solid transparent;border-right:3px solid transparent;border-bottom:3px solid #333"></div>
<div class="a" style="left:955px;top:477px;width:0;height:0;border-left:3px solid transparent;border-right:3px solid transparent;border-top:3px solid #444"></div>
<div class="a" style="left:953px;top:482px;width:9px;height:1px;background:#c5c9ce"></div>
<svg class="a" style="left:953px;top:482px" width="9" height="20" viewBox="953 482 9 20"><path d="M955.5 487 l2 -2 2 2Z M955.5 489.5 l2 -2 2 2Z M955.5 493.5 l2 2 2 -2Z M955.5 496 l2 2 2 -2Z" fill="#222"/></svg>

<!-- main slide -->
<div class="a" style="left:286px;top:130px;width:586px;height:331px;background:rgba(0,0,0,0.06);border-radius:2px"></div>
<div class="a" style="left:289px;top:132px;width:580px;height:326px;background:#fff;box-shadow:0 0 2px rgba(0,0,0,0.35),1px 1px 3px rgba(0,0,0,0.35)"></div>
<div class="a" style="left:289px;top:168px;width:435px;height:254px;background:#2c8ec0"></div>
<div class="a" style="left:730px;top:168px;width:139px;height:254px;background:#e2e2e2"></div>
<!-- slide text -->
<div class="t" style="left:344.8px;top:270.3px;font-size:34px;color:#fff;-webkit-text-stroke:0.45px #2c8ec0;transform:scaleX(0.9);transform-origin:0 0">Keys to Successful</div>
<div class="t" style="left:344.8px;top:309.3px;font-size:34px;color:#fff;-webkit-text-stroke:0.45px #2c8ec0;transform:scaleX(0.955);transform-origin:0 0">Proactive Aging</div>
<div class="t" style="left:345.5px;top:356.8px;font-size:13.2px;color:#fff;transform:scaleX(0.922);transform-origin:0 0">Planning for the Big Four Transitions – Financial Decision-</div>
<div class="t" style="left:345.5px;top:370.8px;font-size:13.2px;color:#fff;transform:scaleX(0.938);transform-origin:0 0">making, Health Care Decision-making, Living, and Driving</div>


<!-- status bar -->
<div class="a" style="left:0;top:510px;width:962px;height:12px;background:linear-gradient(180deg,#e6e9ed,#d5d9de);border-top:1px solid #b9bec5"></div>
<div class="t" style="left:5.8px;top:512.4px;font-size:6.2px;color:#444;transform:scaleX(0.745);transform-origin:0 0">Slide 1 of 42 &nbsp;&#8220;Office Theme&#8221;</div>
<div class="a" style="left:71px;top:511px;width:1px;height:10px;background:#bfc4ca"></div>

<!-- taskbar -->
<div class="a" style="left:0;top:522px;width:962px;height:18px;background:linear-gradient(180deg,#2f6562 0%,#2d7270 50%,#2b7d77 100%)"></div>
<div class="a" style="left:0;top:522px;width:962px;height:10px;background:linear-gradient(90deg,#1c6058 0%,#1a5e58 25%,#7a7a10 27%,#8a7a10 37%,#0a1412 43%,#0a1412 47%,#a05a18 52%,#b06818 62%,#a86018 70%,#8a7020 75%,#1a5a50 77%,#104a48 80%,#104a48 100%)"></div>
<div class="a" style="left:0;top:530.5px;width:962px;height:2.5px;filter:blur(0.6px);background:linear-gradient(90deg,#2d7070 0%,#2d7070 25%,#98a048 27%,#b8b040 38%,#2a5850 44%,#2a5850 47%,#c08040 52%,#d09050 70%,#b0a050 76%,#2f7572 78%,#2f7572 100%)"></div>
<svg class="a" style="left:0;top:520px" width="962" height="20" viewBox="0 520 962 20">
<defs>
<radialGradient id="gOrb" cx="0.5" cy="0.35" r="0.6"><stop offset="0" stop-color="#8fd0f8"/><stop offset="0.55" stop-color="#2a78c8"/><stop offset="1" stop-color="#0f3a78"/></radialGradient>
</defs>
<!-- button frames -->
<g fill="rgba(255,255,255,0.06)" stroke="rgba(210,230,230,0.28)" stroke-width="0.7">
<rect x="63.3" y="522" width="28.5" height="18" rx="1"/>
<rect x="94.3" y="522" width="28.5" height="18" rx="1"/>
<rect x="125.3" y="522" width="28.5" height="18" rx="1"/>
<rect x="156.3" y="522" width="28.5" height="18" rx="1"/>
<rect x="187.3" y="522" width="26.5" height="18" rx="1"/>
<rect x="310.8" y="522" width="26.5" height="18" rx="1"/>
<rect x="342" y="522" width="29" height="18" rx="1"/>
</g>
<rect x="218" y="522" width="26.3" height="18" rx="1" fill="rgba(255,255,255,0.2)" stroke="rgba(230,240,240,0.45)" stroke-width="0.7"/>
<!-- start orb -->
<circle cx="15.8" cy="531.8" r="9" fill="url(#gOrb)" stroke="#0a2a50" stroke-width="0.6"/>
<g transform="translate(15.8 531.5)">
<path d="M-4 -3.5 Q-2 -4.5 -0.3 -3.5 V-0.4 Q-2 -1.2 -4 -0.4Z" fill="#f05a28"/>
<path d="M0.3 -3.5 Q2 -2.6 4 -3.5 V-0.4 Q2 0.4 0.3 -0.4Z" fill="#7cbb2a"/>
<path d="M-4 0.2 Q-2 -0.6 -0.3 0.2 V3.3 Q-2 2.5 -4 3.3Z" fill="#2fa4e8"/>
<path d="M0.3 0.2 Q2 1 4 0.2 V3.3 Q2 4.1 0.3 3.3Z" fill="#f8c020"/>
</g>
<!-- IE -->
<ellipse cx="47" cy="531.5" rx="8" ry="4" fill="none" stroke="#e8b830" stroke-width="1.3" transform="rotate(-25 47 531.5)"/>
<text x="41.3" y="537.3" font-family="Liberation Sans" font-size="15" font-weight="bold" fill="#3aa0e8">e</text>
<!-- outlook -->
<rect x="70" y="524" width="9" height="13" fill="#f4c860"/>
<circle cx="73" cy="530" r="4.2" fill="none" stroke="#e06a1a" stroke-width="2"/>
<rect x="78" y="530" width="7.5" height="7" fill="#f6e8a0" stroke="#c8a040" stroke-width="0.5"/>
<!-- folder -->
<rect x="101" y="526" width="15" height="11" rx="1" fill="#eed890"/>
<rect x="101" y="524.5" width="6" height="3" fill="#d8b860"/>
<rect x="103" y="533" width="11" height="4" rx="1.5" fill="#6aa8d8"/>
<!-- excel -->
<rect x="132" y="524" width="15" height="13" fill="#e8f0e0"/>
<text x="134" y="535" font-family="Liberation Sans" font-size="11" font-weight="bold" fill="#2a8a3a">X</text>
<!-- dropbox -->
<rect x="162.6" y="523" width="15.8" height="16" rx="2.5" fill="#fff"/>
<path d="M166.5 527 l2.3 -1.5 2.2 1.5 -2.2 1.5Z M170.5 527 l2.3 -1.5 2.2 1.5 -2.2 1.5Z M166.5 530 l2.3 -1.5 2.2 1.5 -2.2 1.5Z M170.5 530 l2.3 -1.5 2.2 1.5 -2.2 1.5Z M168.5 532.5 l2.2 -1.3 2.2 1.3 -2.2 1.5Z" fill="#1f62d8"/>
<!-- word -->
<rect x="193" y="527" width="14" height="10" fill="#f0f4fa"/>
<text x="192.3" y="535" font-family="Liberation Sans" font-size="11" font-weight="bold" fill="#1f4fa0">W</text>
<!-- powerpoint -->
<rect x="224" y="529" width="13.5" height="8" fill="#f8efe8"/>
<text x="223.5" y="534" font-family="Liberation Sans" font-size="11" font-weight="bold" fill="#c8461a">P</text>
<!-- book -->
<rect x="256" y="524.5" width="14" height="12" rx="1" fill="#3f74c0"/>
<rect x="258" y="530.5" width="10" height="3" fill="#d8e6f6"/>
<!-- calc -->
<rect x="288.5" y="524" width="11.5" height="14" fill="#7a8a9a"/>
<rect x="289.5" y="530" width="9.5" height="7" fill="#e8eef6"/>
<!-- chrome -->
<circle cx="324" cy="531.2" r="6.8" fill="#dd4a3a"/>
<path d="M324 531.2 L330.8 531.2 A6.8 6.8 0 0 1 320.6 537.1Z" fill="#f6c420"/>
<path d="M324 531.2 L320.6 537.1 A6.8 6.8 0 0 1 318.1 527.8Z" fill="#2a9a48"/>
<circle cx="324" cy="531.2" r="3" fill="#fff"/><circle cx="324" cy="531.2" r="2.2" fill="#3a7ae0"/>
<!-- last -->
<g fill="none" stroke="#fff" stroke-width="1.5"><circle cx="352.5" cy="533" r="2.2"/><circle cx="359.5" cy="533" r="2.2"/><circle cx="356" cy="536" r="2"/></g>
<g fill="none" stroke="rgba(200,220,230,0.4)" stroke-width="1"><circle cx="356" cy="527" r="3"/><circle cx="352" cy="529" r="2.5"/><circle cx="360" cy="529" r="2.5"/></g>
<!-- systray -->
<g fill="#e8e8e8">
<path d="M861.5 532.5 l1.5 -1.8 1.5 1.8Z"/>
<path d="M872 529 v8 h0.8 v-4 h3 v-1 l2.5 0.3 v-2.6 l-2.5 -0.2 v-0.5Z"/>
<rect x="884.5" y="529.3" width="7" height="5.5" fill="none" stroke="#e8e8e8" stroke-width="0.9"/><rect x="886" y="535.5" width="4" height="1.3"/>
<path d="M896.5 531 h1.5 l2.5 -2 v7 l-2.5 -2 h-1.5Z"/>
<path d="M908.5 529.5 l2.5 1.5 2.5 -1.5 M908.5 532.5 l2.5 1.5 2.5 -1.5" fill="none" stroke="#e8e8e8" stroke-width="1.1"/>
</g>
<rect x="954.5" y="521" width="7.5" height="19" fill="rgba(255,255,255,0.12)" stroke="rgba(220,230,230,0.35)" stroke-width="0.6"/>
</svg>
<div class="t" style="left:923.7px;top:531.8px;font-size:8px;color:#f0f0f0;transform:scaleX(0.88);transform-origin:0 0">4/11/2018</div>
<div class="t" style="left:926.2px;top:523.5px;font-size:8px;color:#f0f0f0;transform:scaleX(0.86);transform-origin:0 0">3:07 PM</div>


<!-- left black strip -->
<div class="a" style="left:0;top:0;width:2px;height:522px;background:#0c0c0c"></div>

<!-- video overlay -->
<div class="a" style="left:86px;top:499px;width:866px;height:22px;background:rgba(40,50,49,0.85);border-radius:0 3px 0 0"></div>
<div class="a" style="left:86px;top:521px;width:866px;height:9.3px;background:rgba(40,50,49,0.72);border-radius:0 0 3px 0"></div>
<div class="a" style="left:96px;top:508.6px;width:760px;height:12.4px;border:1px solid rgba(115,115,105,0.8)"></div>
<div class="a" style="left:826px;top:510px;width:9px;height:9.5px;border:1px solid rgba(140,130,60,0.5)"></div>
<svg class="a" style="left:820px;top:505px" width="50" height="20" viewBox="820 505 50 20"><g fill="none" stroke="rgba(125,125,115,0.45)" stroke-width="0.8"><rect x="828.5" y="512" width="4.5" height="5.5"/><rect x="838" y="511.5" width="7" height="7"/><path d="M838 515 h7 M841.5 511.5 v7"/><rect x="849" y="511.5" width="6" height="7" rx="1"/><path d="M860 512 h4 l-2 4Z"/></g></svg>
<div class="a" style="left:12px;top:491.3px;width:65px;height:29.7px;background:rgba(40,50,49,0.85);border-radius:5px 5px 0 0"></div>
<div class="a" style="left:12px;top:521px;width:65px;height:9.3px;background:rgba(40,50,49,0.72);border-radius:0 0 5px 5px"></div>
<svg class="a" style="left:0;top:480px" width="962" height="60" viewBox="0 480 962 60">
<path d="M37.5 502.5 Q37.5 500.6 39.2 501.5 L55 509.7 Q56.5 510.8 55 511.8 L39.2 520 Q37.5 521 37.5 519Z" fill="#fff"/>
<!-- tooltip -->
<path d="M79.2 491.2 H116.3 V506.4 H100.5 L97 509.2 L93.5 506.4 H79.2Z" fill="#fff"/>
<path d="M116.3 491.2 V506.4 H100.5 L97 509.2 M79.2 506.4 H93.5" fill="none" stroke="#222" stroke-width="0.8" opacity="0.7"/>
<!-- volume bars -->
<rect x="866.8" y="517" width="2.6" height="3.7" fill="#1c9be6"/>
<rect x="871.4" y="514.5" width="2.6" height="6.2" fill="#6c6e6d"/>
<rect x="876" y="512.5" width="2.6" height="8.2" fill="#6c6e6d"/>
<rect x="880.6" y="510.5" width="2.6" height="10.2" fill="#6c6e6d"/>
<rect x="885.2" y="508.6" width="2.6" height="12.1" fill="#6c6e6d"/>
<!-- gear -->
<g transform="translate(909.8 515)" fill="#fff">
<g transform="scale(0.86)"><path d="M-1.6 -8.2 h3.2 l0.5 2.4 a6 6 0 0 1 1.9 1.1 l2.3 -0.8 1.6 2.8 -1.8 1.6 a6 6 0 0 1 0 2.2 l1.8 1.6 -1.6 2.8 -2.3 -0.8 a6 6 0 0 1 -1.9 1.1 l-0.5 2.4 h-3.2 l-0.5 -2.4 a6 6 0 0 1 -1.9 -1.1 l-2.3 0.8 -1.6 -2.8 1.8 -1.6 a6 6 0 0 1 0 -2.2 l-1.8 -1.6 1.6 -2.8 2.3 0.8 a6 6 0 0 1 1.9 -1.1Z"/></g>
<circle r="2.6" fill="#3b4241"/>
</g>
<!-- fullscreen -->
<g fill="none" stroke="#fff" stroke-width="1.9" stroke-linecap="square">
<path d="M930.2 513 V509.3 H934 M930.2 509.3 L933.5 512.6"/>
<path d="M942 513 V509.3 H938.2 M942 509.3 L938.7 512.6"/>
<path d="M930.2 517 V520.7 H934 M930.2 520.7 L933.5 517.4"/>
<path d="M942 517 V520.7 H938.2 M942 520.7 L938.7 517.4"/>
</g>
</svg>
<div class="t" style="left:81.8px;top:494.2px;font-family:'Liberation Mono',monospace;font-size:10px;color:#111;-webkit-text-stroke:0.3px #111;transform:scaleX(0.97);transform-origin:0 0">52:12</div>

<!-- help -->
<svg class="a" style="left:950px;top:12px" width="12" height="12" viewBox="950 12 12 12"><circle cx="956.4" cy="18.3" r="4.6" fill="#3f7bd0" stroke="#2a5aa8" stroke-width="0.5"/><text x="956.4" y="21" font-family="Liberation Sans" font-size="7.5" font-weight="bold" fill="#fff" text-anchor="middle">?</text></svg>
<!-- right boxes -->
<div class="a" style="left:916px;top:11px;width:36px;height:35.3px;background:rgba(66,74,75,0.92);border-radius:4px"></div>
<div class="a" style="left:916px;top:52.3px;width:36px;height:35.3px;background:rgba(66,74,75,0.92);border-radius:4px"></div>
<div class="a" style="left:916px;top:93.3px;width:36px;height:35.3px;background:rgba(66,74,75,0.92);border-radius:4px"></div>
<svg class="a" style="left:900px;top:0" width="62" height="140" viewBox="900 0 62 140">
<circle cx="933.8" cy="29.1" r="9.6" fill="none" stroke="#fff" stroke-width="2.6"/>
<path d="M933.9 22.5 V29.3 L938.2 33.6" fill="none" stroke="#fff" stroke-width="2.1" stroke-linecap="round" stroke-linejoin="round"/><circle cx="945.8" cy="19.2" r="1.6" fill="none" stroke="rgba(40,40,40,0.5)" stroke-width="0.8"/>
<g fill="#464d4e" stroke="#fff" stroke-width="1.5" stroke-linejoin="round">
<path d="M924.2 75.4 L937.1 69.6 L943.8 73.8 L931.2 79.4Z"/>
<path d="M924.2 70.9 L937.1 65.1 L943.8 69.3 L931.2 74.9Z"/>
<path d="M924.2 66.4 L937.1 60.6 L943.8 64.8 L931.2 70.4Z"/>
</g>
<path d="M944.8 101.5 L925.3 113.3 L932.8 114.3Z" fill="#fff"/>
<path d="M944.8 101.5 L934 115.2 L937.5 121.3Z" fill="#fff"/>
<path d="M932.6 115.2 L931.6 120.6 L934.4 117Z" fill="#fff"/>
</svg>


</body></html>
